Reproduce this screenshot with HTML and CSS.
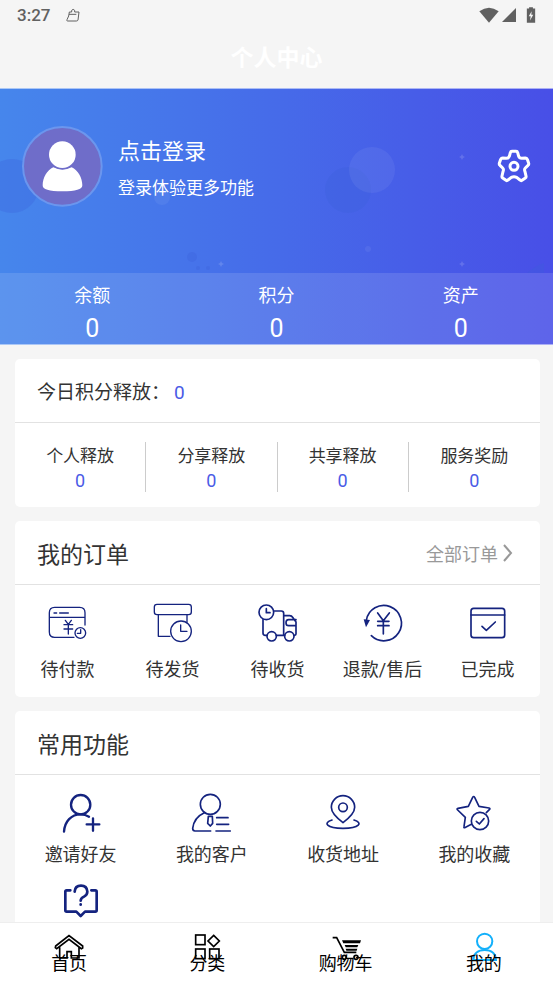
FILE: index.html
```html
<!DOCTYPE html>
<html lang="zh-CN">
<head>
<meta charset="utf-8">
<meta name="viewport" content="width=device-width, initial-scale=1">
<title>个人中心</title>
<link rel="stylesheet" href="styles.css">
</head>
<body>
<div class="app">
  <div class="status">
    <span class="status-time">3:27</span>
    <svg class="status-app" viewBox="0 0 42 42" aria-hidden="true"><path d="M10 12H17V7Q21 1 26 7V12H39L36 36Q35 39 31 39H5Q1 39 3 35L8 24ZM9 19H31"/></svg>
    <svg class="status-wifi" viewBox="0 0 60 48" aria-hidden="true"><path d="M1 13Q30-9 59 13L30 47Z"/></svg>
    <svg class="status-signal" viewBox="0 0 42 42" aria-hidden="true"><path d="M42 0V42H0Z"/></svg>
    <svg class="status-battery" viewBox="0 0 28 50" aria-hidden="true"><path fill-rule="evenodd" d="M8 1H20V5H27V49H1V5H8ZM16 13L7 29H13L11 42L21 24H15Z"/></svg>
  </div>
  <header class="navbar"><h1>个人中心</h1></header>

  <main class="content">
    <section class="hero">
      <svg class="hero-art" viewBox="0 0 553 256" preserveAspectRatio="xMidYMin slice" aria-hidden="true">
        <g fill="#3d5fdc" fill-opacity=".3">
          <circle cx="12" cy="97" r="27"/><circle cx="348" cy="101" r="23"/>
          <circle cx="192" cy="168" r="5"/><circle cx="198" cy="179" r="2"/><circle cx="208" cy="179" r="2"/>
          <path d="M527 184Q535 177 544 174V184Z"/>
        </g>
        <g fill="#fff" fill-opacity=".06">
          <circle cx="372" cy="81" r="23"/><circle cx="162" cy="108" r="8"/><circle cx="368" cy="160" r="3"/>
        </g>
        <path fill="#fff" fill-opacity=".15" d="M221 172l1 2 2 1-2 1-1 2-1-2-2-1 2-1zM462 65l1 2 2 1-2 1-1 2-1-2-2-1 2-1zM462 172l1 2 2 1-2 1-1 2-1-2-2-1 2-1z"/>
      </svg>
      <div class="profile">
        <svg class="avatar" viewBox="0 0 243 243" aria-hidden="true">
          <circle cx="121" cy="121" r="118" fill="#6f6dc9" stroke="#6b96ee" stroke-width="6"/>
          <path fill="#fff" d="M94 124Q121 138 149 124C168 132 181 156 181 178Q181 196 121 196T62 178C62 156 75 132 94 124Z"/>
          <circle cx="121" cy="86" r="44" fill="#6f6dc9"/>
          <circle cx="121" cy="86" r="40" fill="#fff"/>
        </svg>
        <a class="login" href="#login">
          <strong>点击登录</strong>
          <span>登录体验更多功能</span>
        </a>
        <button class="settings" type="button" aria-label="设置">
          <svg viewBox="0 0 96 96"><path d="M37 8Q38 4 42 4H54Q58 4 59 8L62 19Q64 25 71 25L82 24Q86 24 88 28L92 40Q93 44 90 46L82 54Q78 58 81 65L84 78Q85 82 82 84L72 91Q69 93 66 90L56 82Q48 78 40 82L30 90Q27 93 24 91L14 84Q11 82 12 78L15 65Q18 58 14 54L6 46Q3 44 4 40L8 28Q10 24 14 24L25 25Q32 25 34 19Z"/><circle cx="48" cy="49" r="12"/></svg>
        </button>
      </div>
      <dl class="stats">
        <div><dt>余额</dt><dd>0</dd></div>
        <div><dt>积分</dt><dd>0</dd></div>
        <div><dt>资产</dt><dd>0</dd></div>
      </dl>
    </section>

    <section class="card">
      <div class="card-head"><h2 class="today">今日积分释放：<b>0</b></h2></div>
      <dl class="release">
        <div><dt>个人释放</dt><dd>0</dd></div>
        <div><dt>分享释放</dt><dd>0</dd></div>
        <div><dt>共享释放</dt><dd>0</dd></div>
        <div><dt>服务奖励</dt><dd>0</dd></div>
      </dl>
    </section>

    <section class="card">
      <div class="card-head">
        <h2>我的订单</h2>
        <a class="more" href="#orders">全部订单<svg viewBox="0 0 10 18" aria-hidden="true"><path d="M1 1L8 9L1 17"/></svg></a>
      </div>
      <nav class="grid grid-orders">
        <a href="#pay"><svg class="thin" viewBox="0 0 114 114"><path d="M108 63V26Q108 10 92 10H17Q1 10 1 26V84Q1 100 17 100H75M1 40H108M15 27H23M32 27H58M49 49L58 61L67 49M45 62H71M45 75H71M58 61V90M95 77V88H85"/><circle cx="94" cy="87" r="16"/></svg>待付款</a>
        <a href="#ship"><svg class="thin" viewBox="0 0 114 114"><rect x="1" y="1" width="111" height="31" rx="8"/><path d="M13 33V97H48M99 33V54M80 63V82H99"/><circle cx="81" cy="82" r="31"/></svg>待发货</a>
        <a href="#receive"><svg viewBox="0 0 114 114"><circle cx="22" cy="25" r="22"/><path d="M22 14V26H33M44 21H67Q74 21 74 28V94M12 47V87Q12 94 19 94H24M52 94H77M74 35H92Q98 35 102 41L111 54V90Q111 94 106 94M111 47H89Q81 47 81 56T89 65H111"/><circle cx="38" cy="97" r="14"/><circle cx="91" cy="97" r="14"/></svg>待收货</a>
        <a href="#refund"><svg viewBox="0 0 114 114"><path d="M22 95A53 53 0 1 0 7 49M41 27L58 50L76 27M41 52H75M41 65H75M58 50V90"/><path class="solid" d="M-1 46L18 48L6 70Z"/></svg>退款/售后</a>
        <a href="#done"><svg class="medium" viewBox="0 0 114 114"><rect x="6" y="13" width="101" height="88" rx="8"/><path d="M6 33H107M39 67L52 79L79 54"/></svg>已完成</a>
      </nav>
    </section>

    <section class="card">
      <div class="card-head"><h2>常用功能</h2></div>
      <nav class="grid grid-tools">
        <a href="#invite"><svg class="bold" viewBox="0 0 114 114"><circle cx="56" cy="32" r="29"/><path d="M6 113C8 82 28 61 56 61Q70 61 81 68M93 73V110M74 91H112"/></svg>邀请好友</a>
        <a href="#clients"><svg class="medium" viewBox="0 0 114 114"><circle cx="52" cy="31" r="30"/><path d="M34 56Q3 70-1 103Q-1 111 6 111H53M46 67H58L59 88L52 96L44 88ZM71 71H105M71 91H107M69 111H112"/></svg>我的客户</a>
        <a href="#address"><svg class="medium" viewBox="0 0 114 114"><path d="M57 86Q22 60 22 40A35 35 0 0 1 92 40Q92 60 57 86Z"/><circle cx="57" cy="40" r="13"/><path d="M24 78C-4 86 7 103 57 103S118 86 90 78"/></svg>收货地址</a>
        <a href="#favorites"><svg class="medium" viewBox="0 0 114 114"><path d="M49 91L29 101Q26 102 27 98L31 70L8 48Q4 44 9 43L40 37L53 10Q56 5 59 10L72 37L102 42Q107 44 103 47L94 56M64 82L73 90L87 74"/><circle cx="75" cy="81" r="26"/></svg>我的收藏</a>
        <a href="#help" aria-label="帮助"><svg class="heavy" viewBox="0 0 114 114"><path d="M25 22H14Q10 22 10 26V82Q10 86 14 86H43L56 99L69 86H100Q104 86 104 82V26Q104 22 100 22H88M38 26Q39 8 57 8T76 26Q76 35 66 41Q56 46 56 53M56 64V65"/></svg></a>
      </nav>
    </section>
  </main>

  <nav class="tabbar">
    <a href="#home"><svg viewBox="0 0 90 90"><path d="M5 42L45 11L86 42V48L82 50L45 22L8 50L4 47ZM17 46V78H39V59H52V78H75V46"/></svg><span>首页</span></a>
    <a href="#category"><svg viewBox="0 0 90 90"><rect x="11" y="9" width="28" height="29"/><path d="M65 10L82 27L65 44L48 27Z"/><rect x="11" y="51" width="28" height="29"/><rect x="53" y="51" width="28" height="29"/></svg><span>分类</span></a>
    <a href="#cart"><svg viewBox="0 0 90 90"><path d="M5 17H17L40 61H76"/><path class="solid" d="M33 25H90L87 34H37ZM41 39H82L79 46H44ZM44 50H79L77 56H46Z"/><circle cx="40" cy="76" r="6"/><circle cx="75" cy="76" r="6"/></svg><span>购物车</span></a>
    <a class="active" href="#me" aria-current="page"><svg viewBox="0 0 90 90"><circle cx="47" cy="28" r="23"/><path d="M13 84C14 65 27 54 47 54S80 65 81 84Z"/></svg><span>我的</span></a>
  </nav>
</div>
</body>
</html>
```

FILE: styles.css
```css
* { box-sizing: border-box; }

body {
  margin: 0;
  background: #f5f5f5;
  color: #333;
  font-family: Roboto, "Noto Sans CJK SC", sans-serif;
  font-size: 18px;
}

h1, h2, dl, dd { margin: 0; font-weight: 400; }
a { color: inherit; text-decoration: none; }
svg { display: block; flex: none; overflow: visible; }

.app {
  display: flex;
  flex-direction: column;
  height: 100vh;
}

/* Status bar */
.status {
  display: flex;
  align-items: center;
  height: 30px;
  padding: 0 17px;
  color: #616161;
}
.status-time { font-size: 17px; line-height: 30px; font-weight: 500; }
.status-app { width: 14px; height: 14px; margin-left: 16px; fill: none; stroke: currentColor; stroke-width: 3; }
.status-wifi { width: 20px; height: 16px; margin-left: auto; fill: currentColor; }
.status-signal { width: 14px; height: 14px; margin-left: 3px; fill: currentColor; }
.status-battery { width: 10px; height: 16px; margin-left: 10px; fill: currentColor; }

.navbar { height: 58px; }
.navbar h1 {
  color: #fff;
  font-size: 23px;
  font-weight: 700;
  line-height: 58px;
  text-align: center;
}

.content {
  flex: 1;
  min-height: 0;
  overflow-y: auto;
  scrollbar-width: none;
}

/* Profile banner */
.hero {
  position: relative;
  overflow: hidden;
  border: solid rgba(255, 255, 255, .55);
  border-width: 1px 0;
  background: linear-gradient(90deg, #4686ec, #466be9 50%, #484fe7);
  color: #fff;
}
.hero-art { position: absolute; inset: 0; width: 100%; height: 100%; }
.profile {
  position: relative;
  display: flex;
  align-items: center;
  height: 184px;
  padding: 0 23px 30px 22px;
}
.avatar { width: 81px; height: 81px; }
.login { flex: 1; margin-left: 15px; padding-top: 8px; }
.login strong, .login span { display: block; font-weight: 400; line-height: 36px; }
.login strong { font-size: 22px; }
.login span { font-size: 17px; }
.settings { padding: 0; border: 0; background: none; }
.settings svg { width: 32px; height: 32px; fill: none; stroke: #fff; stroke-width: 9; stroke-linejoin: round; }

.stats {
  position: relative;
  display: grid;
  grid-template-columns: repeat(3, 1fr);
  padding-top: 5px;
  background: rgba(255, 255, 255, .12);
  text-align: center;
}
.stats dt { line-height: 36px; }
.stats dd { font-size: 25px; line-height: 30px; }

/* Cards */
.card {
  margin: 14px 13px 0 15px;
  border-radius: 5px;
  background: #fff;
}
.card-head {
  display: flex;
  align-items: center;
  justify-content: space-between;
  height: 64px;
  padding: 0 27px 0 22px;
  border-bottom: 1px solid #e2e2e2;
}
.card-head h2 { font-size: 23px; }
.card-head .today { font-size: 19px; }
.today b, .release dd { color: #4a5be6; font-weight: 400; }
.today b { margin-left: 4px; }
.more { display: flex; align-items: center; gap: 5px; color: #999; }
.more svg { width: 10px; height: 18px; fill: none; stroke: currentColor; stroke-width: 2; }

.release {
  display: grid;
  grid-template-columns: repeat(4, 1fr);
  padding: 19px 0 15px;
  text-align: center;
}
.release div { border-right: 1px solid #ccc; }
.release div:last-child { border-right: 0; }
.release dt { font-size: 17px; line-height: 28px; }
.release dd { line-height: 22px; }

.grid { display: grid; line-height: 28px; }
.grid a { display: flex; flex-direction: column; align-items: center; }
.grid svg {
  width: 38px;
  height: 38px;
  fill: none;
  stroke: #14237f;
  stroke-width: 5;
  stroke-linecap: round;
  stroke-linejoin: round;
}
.grid .solid { fill: #14237f; stroke: none; }
.grid .thin { stroke-width: 4; }
.grid .medium { stroke-width: 5; }
.grid .bold { stroke-width: 7; }
.grid .heavy { stroke-width: 8; }
.grid-orders { grid-template-columns: repeat(5, 1fr); padding: 19px 0 13px; }
.grid-orders a { gap: 14px; }
.grid-tools { grid-template-columns: repeat(4, 1fr); row-gap: 14px; padding: 19px 0 14px; }
.grid-tools a { gap: 9px; }

/* Bottom tabs */
.tabbar {
  display: grid;
  grid-template-columns: repeat(4, 1fr);
  height: 62px;
  padding-top: 9px;
  border-top: 1px solid #eee;
  background: #fff;
  color: #000;
}
.tabbar a { display: flex; flex-direction: column; align-items: center; }
.tabbar svg { width: 30px; height: 30px; fill: none; stroke: #000; stroke-width: 5; }
.tabbar .solid { fill: #000; stroke: none; }
.tabbar .active svg { stroke: #12b0fb; stroke-width: 6; }
.tabbar span { margin-top: -12px; line-height: 28px; z-index: 1; }
```
